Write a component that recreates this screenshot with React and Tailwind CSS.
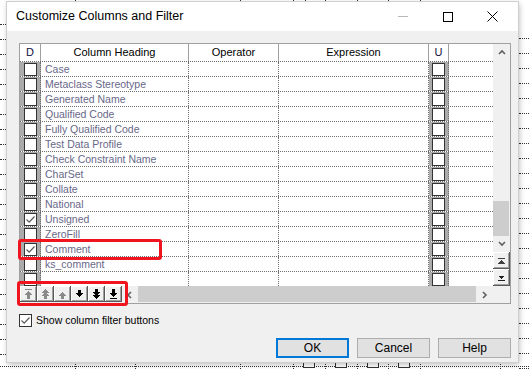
import React from "react";

const rows = [
  ["Case", false],
  ["Metaclass Stereotype", false],
  ["Generated Name", false],
  ["Qualified Code", false],
  ["Fully Qualified Code", false],
  ["Test Data Profile", false],
  ["Check Constraint Name", false],
  ["CharSet", false],
  ["Collate", false],
  ["National", false],
  ["Unsigned", true],
  ["ZeroFill", false],
  ["Comment", true],
  ["ks_comment", false],
  ["", false],
];

function Box({ checked }) {
  return (
    <div className="w-[13px] h-[13px] bg-white border border-[#333] flex items-center justify-center">
      {checked && (
        <svg width="11" height="11" viewBox="0 0 11 11">
          <path d="M1.5 5.5 L4.2 8.2 L9.5 2.5" fill="none" stroke="#5a5a5a" strokeWidth="1.2" />
        </svg>
      )}
    </div>
  );
}

const raised =
  "bg-[#f0f0f0] shadow-[inset_-1px_-1px_0_#5a5a5a,inset_1px_1px_0_#ffffff,inset_-2px_-2px_0_#a0a0a0]";

function TbIcon({ kind }) {
  const g = "#8a8a8a";
  const b = "#000000";
  if (kind === 0)
    return (
      <svg width="9" height="11" viewBox="0 0 9 11" shapeRendering="crispEdges">
        <rect x="1" y="0" width="7" height="1" fill={g} />
        <polygon points="4.5,2 8.5,6 0.5,6" fill={g} />
        <rect x="3" y="6" width="3" height="4" fill={g} />
      </svg>
    );
  if (kind === 1)
    return (
      <svg width="9" height="11" viewBox="0 0 9 11" shapeRendering="crispEdges">
        <polygon points="4.5,0 8.5,4 0.5,4" fill={g} />
        <polygon points="4.5,3 8.5,7 0.5,7" fill={g} />
        <rect x="3" y="7" width="3" height="3" fill={g} />
      </svg>
    );
  if (kind === 2)
    return (
      <svg width="9" height="11" viewBox="0 0 9 11" shapeRendering="crispEdges">
        <polygon points="4.5,3 8.5,7 0.5,7" fill={g} />
        <rect x="3" y="7" width="3" height="3" fill={g} />
      </svg>
    );
  if (kind === 3)
    return (
      <svg width="9" height="11" viewBox="0 0 9 11" shapeRendering="crispEdges">
        <rect x="3" y="1" width="3" height="3" fill={b} />
        <polygon points="0.5,4 8.5,4 4.5,8" fill={b} />
      </svg>
    );
  if (kind === 4)
    return (
      <svg width="9" height="11" viewBox="0 0 9 11" shapeRendering="crispEdges">
        <rect x="3" y="0" width="3" height="3" fill={b} />
        <polygon points="0.5,3 8.5,3 4.5,7" fill={b} />
        <polygon points="0.5,6 8.5,6 4.5,10" fill={b} />
      </svg>
    );
  return (
    <svg width="9" height="11" viewBox="0 0 9 11" shapeRendering="crispEdges">
      <rect x="3" y="0" width="3" height="4" fill={b} />
      <polygon points="0.5,4 8.5,4 4.5,8" fill={b} />
      <rect x="1" y="9" width="7" height="1" fill={b} />
    </svg>
  );
}

function Chevron({ dir }) {
  const pts = {
    up: "1,5 4,2 7,5",
    down: "1,2 4,5 7,2",
    left: "5,1 2,4 5,7",
    right: "2,1 5,4 2,7",
  }[dir];
  return (
    <svg width="8" height="8" viewBox="0 0 8 8">
      <polyline points={pts} fill="none" stroke="#606060" strokeWidth="1.6" />
    </svg>
  );
}

const leftMarks = Array.from({ length: 23 });

export default function App() {
  return (
    <div className="relative w-[529px] h-[369px] overflow-hidden bg-white font-['Liberation_Sans',Arial,sans-serif]">
      {/* desktop background behind the dialog */}
      <div className="absolute left-0 top-[24px] flex flex-col gap-[14px]">
        {leftMarks.map((_, i) => (
          <div key={i} className="w-[6px] border-t border-dotted border-[#333]" />
        ))}
      </div>
      <div className="absolute right-0 top-[38px] flex flex-col gap-[14px]">
        {leftMarks.map((_, i) => (
          <div key={i} className="w-[10px] border-t border-dotted border-[#333]" />
        ))}
      </div>
      <div className="absolute top-0 left-[75px] h-[3px] border-l border-dotted border-[#333]" />
      <div className="absolute top-0 left-[240px] h-[3px] border-l border-dotted border-[#333]" />
      <div className="absolute top-0 left-[293px] h-[3px] border-l border-dotted border-[#333]" />
      <div className="absolute top-0 left-[305px] h-[3px] border-l border-dotted border-[#333]" />
      <div className="absolute top-0 left-[325px] h-[3px] border-l border-dotted border-[#333]" />
      <div className="absolute top-0 left-[357px] h-[3px] border-l border-dotted border-[#333]" />
      <div className="absolute top-0 left-[388px] h-[3px] border-l border-dotted border-[#333]" />
      <div className="absolute top-0 left-[420px] h-[3px] border-l border-dotted border-[#333]" />
      <div className="absolute left-0 right-0 top-[366px] border-t border-dotted border-[#333]" />
      <div className="absolute top-[362px] left-[75px] h-[7px] border-l border-dotted border-[#333]" />
      <div className="absolute top-[362px] left-[135px] h-[7px] border-l border-dotted border-[#333]" />
      <div className="absolute top-[362px] left-[240px] h-[7px] border-l border-dotted border-[#333]" />
      <div className="absolute top-[362px] left-[293px] h-[7px] border-l border-dotted border-[#333]" />
      <div className="absolute top-[362px] left-[325px] h-[7px] border-l border-dotted border-[#333]" />
      <div className="absolute top-[362px] left-[357px] h-[7px] border-l border-dotted border-[#333]" />
      <div className="absolute top-[362px] left-[388px] h-[7px] border-l border-dotted border-[#333]" />
      <div className="absolute top-[362px] left-[420px] h-[7px] border-l border-dotted border-[#333]" />
      <div className="absolute top-[362px] left-[500px] h-[7px] border-l border-dotted border-[#333]" />
      <div className="absolute top-[361px] left-[303px] w-[12px] h-[7px] border-x border-b border-[#333] bg-white" />
      <div className="absolute top-[361px] left-[335px] w-[12px] h-[7px] border-x border-b border-[#333] bg-white" />
      <div className="absolute top-[361px] left-[367px] w-[12px] h-[7px] border-x border-b border-[#333] bg-white" />
      <div className="absolute top-[361px] left-[398px] w-[12px] h-[7px] border-x border-b border-[#333] bg-white" />

      {/* dialog window */}
      <div className="absolute left-[7px] top-[2px] w-[511px] h-[360px] bg-[#f0f0f0] flex flex-col shadow-[0_0_0_1px_#cfcfcf,1px_2px_6px_rgba(0,0,0,0.3)]">
        {/* title bar */}
        <div className="h-[29px] bg-white flex items-center">
          <div className="pl-[9px] text-[12.5px] text-black">Customize Columns and Filter</div>
          <div className="ml-auto mr-[3px] flex h-full">
            <div className="w-[45px] flex items-center justify-center">
              <div className="w-[10px] border-t border-[#b8b8b8]" />
            </div>
            <div className="w-[45px] flex items-center justify-center">
              <div className="w-[10px] h-[10px] border border-black" />
            </div>
            <div className="w-[45px] flex items-center justify-center">
              <svg width="11" height="11" viewBox="0 0 11 11">
                <path d="M0.5 0.5 L10.5 10.5 M10.5 0.5 L0.5 10.5" stroke="#000" strokeWidth="1" />
              </svg>
            </div>
          </div>
        </div>

        {/* body */}
        <div className="flex-1 flex flex-col pl-[12px] pr-[7px] pt-[12px]">
          {/* grid */}
          <div className="w-[492px] h-[261px] border border-[#a0a0a0] flex flex-col bg-[#f0f0f0]">
            <div className="flex h-[242px]">
              <div className="w-[473px] flex flex-col bg-white">
                {/* header */}
                <div className="flex h-[18px] border-b border-dotted border-[#6e6e6e] text-[11px] text-black leading-[17px] bg-white">
                  <div className="w-[21px] border-r border-[#a0a0a0] text-center text-[#101040]">D</div>
                  <div className="w-[148px] border-r border-[#a0a0a0] text-center">Column Heading</div>
                  <div className="w-[90px] border-r border-[#a0a0a0] text-center">Operator</div>
                  <div className="w-[150px] border-r border-[#a0a0a0] text-center">Expression</div>
                  <div className="w-[20px] border-r border-[#a0a0a0] text-center text-[#101040]">U</div>
                  <div className="flex-1" />
                </div>
                {/* rows */}
                <div className="flex-1 overflow-hidden">
                  {rows.map(([name, checked], i) => (
                    <div key={i} className="flex h-[15px] border-b border-dotted border-[#6e6e6e]">
                      <div className="w-[21px] bg-[#ababab] border-r border-dotted border-[#6e6e6e] flex items-center justify-center">
                        <Box checked={checked} />
                      </div>
                      <div className="w-[148px] border-r border-dotted border-[#6e6e6e] pl-[4px] text-[10.5px] leading-[14px] text-[#686888] whitespace-nowrap overflow-hidden">
                        {name}
                      </div>
                      <div className="w-[90px] border-r border-dotted border-[#6e6e6e]" />
                      <div className="w-[150px] border-r border-dotted border-[#6e6e6e]" />
                      <div className="w-[20px] bg-[#ababab] border-r border-dotted border-[#6e6e6e] flex items-center justify-center">
                        <Box checked={false} />
                      </div>
                      <div className="flex-1" />
                    </div>
                  ))}
                </div>
              </div>
              {/* vertical scrollbar */}
              <div className="w-[17px] flex flex-col bg-[#f0f0f0]">
                <div className="h-[17px] flex items-center justify-center">
                  <Chevron dir="up" />
                </div>
                <div className="h-[175px] flex flex-col justify-end">
                  <div className="h-[35px] bg-[#cdcdcd] mr-[1px]" />
                </div>
                <div className="h-[16px] flex items-center justify-center">
                  <Chevron dir="down" />
                </div>
                <div className={`h-[17px] flex items-center justify-center ${raised}`}>
                  <svg width="7" height="6" viewBox="0 0 7 6" shapeRendering="crispEdges">
                    <rect x="0" y="0" width="7" height="1" fill="#404040" />
                    <polygon points="3.5,2 7,5.5 0,5.5" fill="#404040" />
                  </svg>
                </div>
                <div className={`h-[17px] flex items-center justify-center ${raised}`}>
                  <svg width="7" height="6" viewBox="0 0 7 6" shapeRendering="crispEdges">
                    <polygon points="0,0.5 7,0.5 3.5,4" fill="#202020" />
                    <rect x="0" y="5" width="7" height="1" fill="#202020" />
                  </svg>
                </div>
              </div>
            </div>
            {/* horizontal bar with toolbar */}
            <div className="flex h-[17px]">
              <div className="flex">
                {[0, 1, 2, 3, 4, 5].map((k) => (
                  <div key={k} className={`w-[17px] h-[16px] flex items-center justify-center ${raised}`}>
                    <TbIcon kind={k} />
                  </div>
                ))}
              </div>
              <div className="w-[16px] flex items-center justify-center">
                <Chevron dir="left" />
              </div>
              <div className="w-[338px] bg-[#cdcdcd] mb-[1px]" />
              <div className="w-[17px] flex items-center justify-center">
                <Chevron dir="right" />
              </div>
              <div className="w-[17px]" />
            </div>
          </div>

          {/* show filter checkbox */}
          <div className="mt-[10px] flex items-center gap-[4px] h-[13px]">
            <div className="w-[13px] h-[13px] bg-white border border-[#333] flex items-center justify-center">
              <svg width="11" height="11" viewBox="0 0 11 11">
                <path d="M1.5 5.5 L4.2 8.2 L9.5 2.5" fill="none" stroke="#5a5a5a" strokeWidth="1.2" />
              </svg>
            </div>
            <span className="text-[10.5px] text-black leading-[13px]">Show column filter buttons</span>
          </div>

          {/* buttons */}
          <div className="mt-[11px] flex justify-end gap-[8px]">
            <div className="w-[73px] h-[20px] bg-[#e1e1e1] border-2 border-[#0078d7] flex items-center justify-center text-[12px] text-black">
              OK
            </div>
            <div className="w-[73px] h-[20px] bg-[#e1e1e1] border border-[#adadad] flex items-center justify-center text-[12px] text-black">
              Cancel
            </div>
            <div className="w-[73px] h-[20px] bg-[#e1e1e1] border border-[#adadad] flex items-center justify-center text-[12px] text-black">
              Help
            </div>
          </div>
        </div>
      </div>

      {/* red annotations */}
      <div className="absolute left-[18px] top-[239px] w-[144px] h-[21px] border-[3px] border-[#f0141e] rounded-[3px]" />
      <div className="absolute left-[17px] top-[281px] w-[111px] h-[25px] border-[3px] border-[#f0141e] rounded-[3px]" />
    </div>
  );
}
